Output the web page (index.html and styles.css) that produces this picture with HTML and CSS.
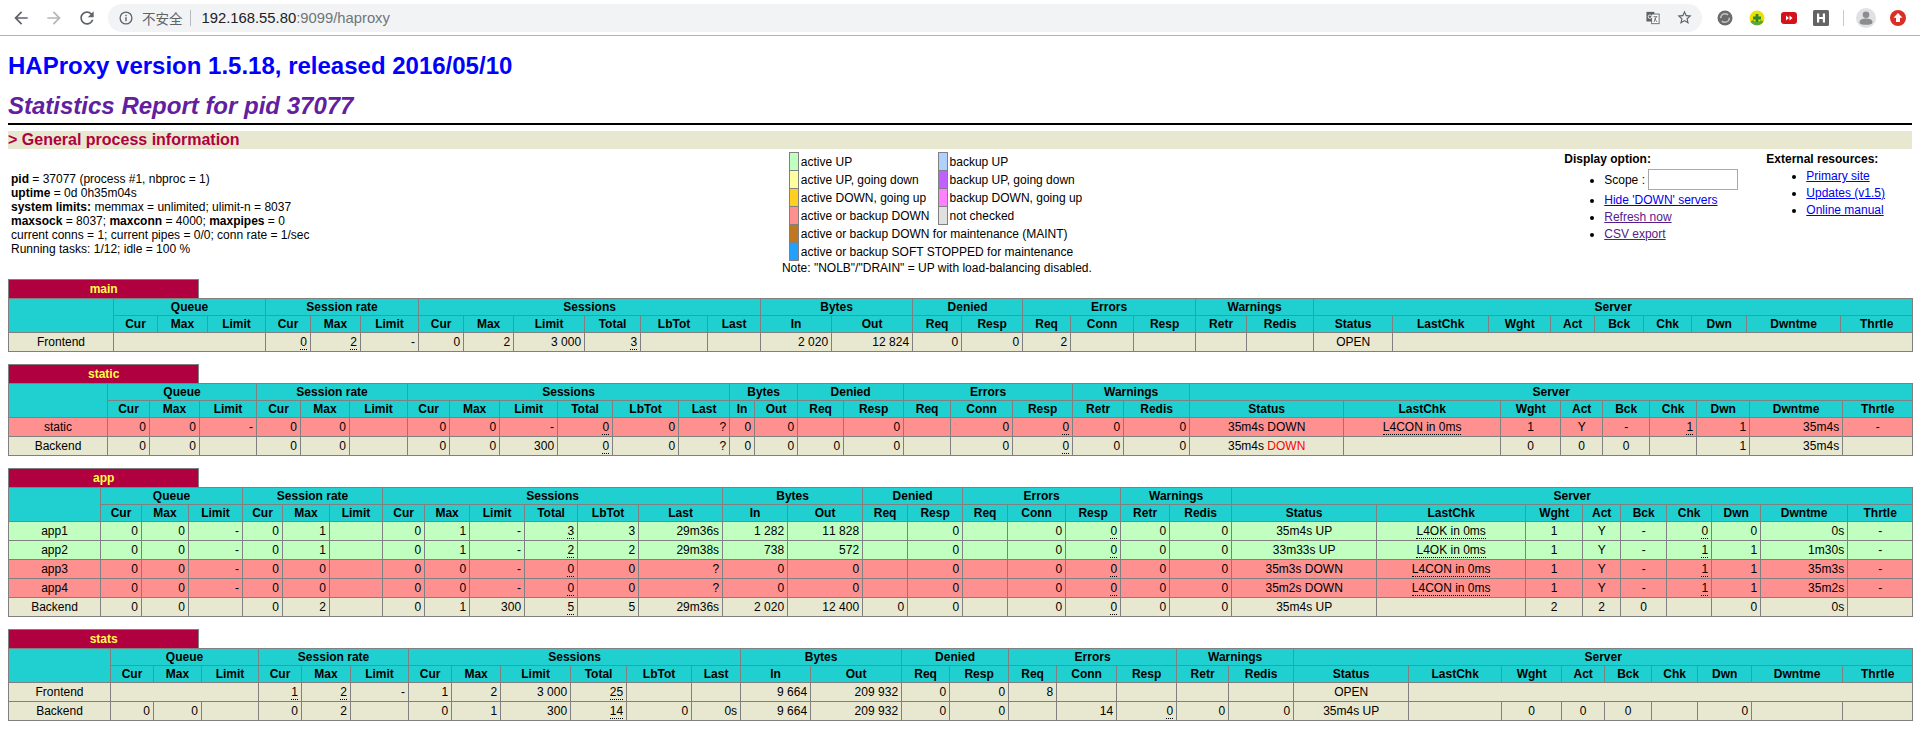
FILE: index.html
```html
<!DOCTYPE html>
<html lang="en">
<head>
<meta charset="utf-8">
<title>Statistics Report for HAProxy</title>
<link rel="stylesheet" href="styles.css">
</head>
<body>
<header class="toolbar">
  <svg class="nav nav-first" viewBox="0 0 24 24"><path fill="#5f6368" d="M20 11H7.83l5.59-5.59L12 4l-8 8 8 8 1.41-1.41L7.83 13H20v-2z"/></svg>
  <svg class="nav" viewBox="0 0 24 24"><path fill="#b4b6b9" d="M12 4l-1.41 1.41L16.17 11H4v2h12.17l-5.58 5.59L12 20l8-8z"/></svg>
  <svg class="nav" viewBox="0 0 24 24"><path fill="#5f6368" d="M17.65 6.35C16.2 4.9 14.21 4 12 4c-4.42 0-7.99 3.58-7.99 8s3.57 8 7.99 8c3.73 0 6.84-2.55 7.73-6h-2.08c-.82 2.33-3.04 4-5.65 4-3.31 0-6-2.69-6-6s2.69-6 6-6c1.66 0 3.14.69 4.22 1.78L13 11h7V4l-2.35 2.35z"/></svg>
  <div class="omnibox">
    <svg class="info" viewBox="0 0 14 14"><circle cx="7" cy="7" r="5.9" fill="none" stroke="#5f6368" stroke-width="1.3"/><rect x="6.3" y="6.2" width="1.4" height="4" fill="#5f6368"/><rect x="6.3" y="3.8" width="1.4" height="1.4" fill="#5f6368"/></svg>
    <span class="insecure">不安全</span>
    <span class="sep"></span>
    <span class="url"><span class="host">192.168.55.80</span>:9099/haproxy</span>
    <svg class="translate" viewBox="0 0 16 16"><rect x="0.5" y="1" width="9" height="11" fill="#5f6368"/><rect x="6.5" y="3.5" width="8.5" height="11" fill="#fff" stroke="#5f6368"/><path d="M8.5 6.5h4.5M11.8 6.5l-2.6 6M9.6 8.5l3 4" fill="none" stroke="#5f6368"/><circle cx="4.5" cy="6.5" r="2" fill="none" stroke="#fff"/></svg>
    <svg class="star" viewBox="0 0 24 24"><path fill="#5f6368" d="M22 9.24l-7.19-.62L12 2 9.19 8.63 2 9.24l5.46 4.73L5.82 21 12 17.27 18.18 21l-1.63-7.03L22 9.24zM12 15.4l-3.76 2.27 1-4.28-3.32-2.88 4.38-.38L12 6.1l1.71 4.04 4.38.38-3.32 2.88 1 4.28L12 15.4z"/></svg>
  </div>
  <svg class="ext ext-first" viewBox="0 0 16 16"><circle cx="8" cy="8" r="7.5" fill="#6b6b6b"/><circle cx="8" cy="8" r="4.3" fill="none" stroke="#c4c4c4" stroke-width="1.6" stroke-dasharray="10 3"/></svg>
  <svg class="ext" viewBox="0 0 16 16"><circle cx="8" cy="8" r="7.5" fill="#f0e000"/><path d="M1.5 11.5A7.5 7.5 0 0 0 14.5 11.5L12 10A5 5 0 0 1 4 10z" fill="#58a83c"/><path d="M6.6 4h2.8v2.6H12v2.8H9.400v2.600H6.600V9.400H4V6.600h2.600z" fill="#2c8a2c"/></svg>
  <svg class="ext" viewBox="0 0 16 16"><rect y="2" width="16" height="12" rx="3" fill="#d3121b"/><path d="M5 5.500l3 2.500-3 2.500zM8.500 5.500l3 2.500-3 2.500z" fill="#fff"/></svg>
  <svg class="ext" viewBox="0 0 16 16"><rect width="16" height="16" rx="1.500" fill="#646464"/><path d="M4 3.500h2.200v3.400h3.600V3.500H12v9H9.800V8.900H6.200v3.600H4z" fill="#fff"/></svg>
  <span class="tool-sep"></span>
  <svg class="avatar" viewBox="0 0 20 20"><circle cx="10" cy="10" r="10" fill="#dfe1e4"/><circle cx="10" cy="6.800" r="3.300" fill="#8d8d8d"/><path d="M3.500 14c0-2.500 3.500-3.600 6.500-3.600s6.500 1.100 6.500 3.600-3 2.800-6.500 2.800-6.500-.3-6.500-2.800z" fill="#8d8d8d"/></svg>
  <svg class="update" viewBox="0 0 16 16"><circle cx="8" cy="8" r="8" fill="#d93025"/><path d="M8 3l4.500 4.800H10V12H6V7.800H3.500z" fill="#fff"/></svg>
</header>

<main class="page">
<h1><a class="home" href="#">HAProxy version 1.5.18, released 2016/05/10</a></h1>
<h2>Statistics Report for pid 37077</h2>
<hr class="rule">
<h3>&gt; General process information</h3>

<table class="overview">
<tr>
<td class="ov-proc">
<p class="proc"><b>pid</b> = 37077 (process #1, nbproc = 1)<br>
<b>uptime</b> = 0d 0h35m04s<br>
<b>system limits:</b> memmax = unlimited; ulimit-n = 8037<br>
<b>maxsock</b> = 8037; <b>maxconn</b> = 4000; <b>maxpipes</b> = 0<br>
current conns = 1; current pipes = 0/0; conn rate = 1/sec<br>
Running tasks: 1/12; idle = 100 %</p>
</td>
<td class="ov-legend">
<table class="lgd">
<tr><td class="c-up">&nbsp;</td><td class="noborder">active UP </td><td class="c-bup">&nbsp;</td><td class="noborder">backup UP </td></tr>
<tr><td class="c-nolb">&nbsp;</td><td class="noborder">active UP, going down </td><td class="c-bnolb">&nbsp;</td><td class="noborder">backup UP, going down </td></tr>
<tr><td class="c-goup">&nbsp;</td><td class="noborder">active DOWN, going up </td><td class="c-bgoup">&nbsp;</td><td class="noborder">backup DOWN, going up </td></tr>
<tr><td class="c-down">&nbsp;</td><td class="noborder">active or backup DOWN &nbsp;</td><td class="c-nochk">&nbsp;</td><td class="noborder">not checked </td></tr>
<tr><td class="c-maint">&nbsp;</td><td class="noborder" colspan="3">active or backup DOWN for maintenance (MAINT) &nbsp;</td></tr>
<tr><td class="c-soft">&nbsp;</td><td class="noborder" colspan="3">active or backup SOFT STOPPED for maintenance &nbsp;</td></tr>
</table>
Note: "NOLB"/"DRAIN" = UP with load-balancing disabled.
</td>
<td class="ov-side">
<b>Display option:</b>
<ul class="opts">
<li><form class="scope">Scope : <input class="scope-input" name="scope"></form></li>
<li><a href="#hide">Hide 'DOWN' servers</a></li>
<li><a class="seen" href="#refresh">Refresh now</a></li>
<li><a class="seen" href="#csv">CSV export</a></li>
</ul>
</td>
<td class="ov-side">
<b>External resources:</b>
<ul class="opts">
<li><a href="#site">Primary site</a></li>
<li><a href="#updates">Updates (v1.5)</a></li>
<li><a href="#manual">Online manual</a></li>
</ul>
</td>
</tr>
</table>

<table class="tbl name"><tr><th class="pxname">main</th><th class="empty"></th></tr></table>
<table class="tbl stats t-main">
<colgroup><col><col><col><col><col><col><col><col><col><col><col><col><col><col><col><col><col><col><col><col><col><col><col><col><col><col><col><col><col><col><col></colgroup>
<tr class="titre"><th rowspan="2"></th><th colspan="3">Queue</th><th colspan="3">Session rate</th><th colspan="6">Sessions</th><th colspan="2">Bytes</th><th colspan="2">Denied</th><th colspan="3">Errors</th><th colspan="2">Warnings</th><th colspan="9">Server</th></tr>
<tr class="titre"><th>Cur</th><th>Max</th><th>Limit</th><th>Cur</th><th>Max</th><th>Limit</th><th>Cur</th><th>Max</th><th>Limit</th><th>Total</th><th>LbTot</th><th>Last</th><th>In</th><th>Out</th><th>Req</th><th>Resp</th><th>Req</th><th>Conn</th><th>Resp</th><th>Retr</th><th>Redis</th><th>Status</th><th>LastChk</th><th>Wght</th><th>Act</th><th>Bck</th><th>Chk</th><th>Dwn</th><th>Dwntme</th><th>Thrtle</th></tr>
<tr class="r-px"><td class="ac">Frontend</td><td colspan="3"></td><td><u>0</u></td><td><u>2</u></td><td>-</td><td>0</td><td>2</td><td><span class="rls">3</span>000</td><td><u>3</u></td><td></td><td></td><td><span class="rls">2</span>020</td><td>1<span class="rls">2</span>824</td><td>0</td><td>0</td><td>2</td><td></td><td></td><td></td><td></td><td class="ac">OPEN</td><td colspan="8"></td></tr>
</table>
<p class="gap"></p>

<table class="tbl name"><tr><th class="pxname">static</th><th class="empty"></th></tr></table>
<table class="tbl stats t-static">
<colgroup><col><col><col><col><col><col><col><col><col><col><col><col><col><col><col><col><col><col><col><col><col><col><col><col><col><col><col><col><col><col><col></colgroup>
<tr class="titre"><th rowspan="2"></th><th colspan="3">Queue</th><th colspan="3">Session rate</th><th colspan="6">Sessions</th><th colspan="2">Bytes</th><th colspan="2">Denied</th><th colspan="3">Errors</th><th colspan="2">Warnings</th><th colspan="9">Server</th></tr>
<tr class="titre"><th>Cur</th><th>Max</th><th>Limit</th><th>Cur</th><th>Max</th><th>Limit</th><th>Cur</th><th>Max</th><th>Limit</th><th>Total</th><th>LbTot</th><th>Last</th><th>In</th><th>Out</th><th>Req</th><th>Resp</th><th>Req</th><th>Conn</th><th>Resp</th><th>Retr</th><th>Redis</th><th>Status</th><th>LastChk</th><th>Wght</th><th>Act</th><th>Bck</th><th>Chk</th><th>Dwn</th><th>Dwntme</th><th>Thrtle</th></tr>
<tr class="r-down"><td class="ac">static</td><td>0</td><td>0</td><td>-</td><td>0</td><td>0</td><td></td><td>0</td><td>0</td><td>-</td><td><u>0</u></td><td>0</td><td>?</td><td>0</td><td>0</td><td></td><td>0</td><td></td><td>0</td><td><u>0</u></td><td>0</td><td>0</td><td class="ac">35m4s DOWN</td><td class="ac"><u>L4CON in 0ms</u></td><td class="ac">1</td><td class="ac">Y</td><td class="ac">-</td><td><u>1</u></td><td>1</td><td>35m4s</td><td class="ac">-</td></tr>
<tr class="r-px"><td class="ac">Backend</td><td>0</td><td>0</td><td></td><td>0</td><td>0</td><td></td><td>0</td><td>0</td><td>300</td><td><u>0</u></td><td>0</td><td>?</td><td>0</td><td>0</td><td>0</td><td>0</td><td></td><td>0</td><td><u>0</u></td><td>0</td><td>0</td><td class="ac">35m4s <span class="red">DOWN</span></td><td></td><td class="ac">0</td><td class="ac">0</td><td class="ac">0</td><td></td><td>1</td><td>35m4s</td><td></td></tr>
</table>
<p class="gap"></p>

<table class="tbl name"><tr><th class="pxname">app</th><th class="empty"></th></tr></table>
<table class="tbl stats t-app">
<colgroup><col><col><col><col><col><col><col><col><col><col><col><col><col><col><col><col><col><col><col><col><col><col><col><col><col><col><col><col><col><col><col></colgroup>
<tr class="titre"><th rowspan="2"></th><th colspan="3">Queue</th><th colspan="3">Session rate</th><th colspan="6">Sessions</th><th colspan="2">Bytes</th><th colspan="2">Denied</th><th colspan="3">Errors</th><th colspan="2">Warnings</th><th colspan="9">Server</th></tr>
<tr class="titre"><th>Cur</th><th>Max</th><th>Limit</th><th>Cur</th><th>Max</th><th>Limit</th><th>Cur</th><th>Max</th><th>Limit</th><th>Total</th><th>LbTot</th><th>Last</th><th>In</th><th>Out</th><th>Req</th><th>Resp</th><th>Req</th><th>Conn</th><th>Resp</th><th>Retr</th><th>Redis</th><th>Status</th><th>LastChk</th><th>Wght</th><th>Act</th><th>Bck</th><th>Chk</th><th>Dwn</th><th>Dwntme</th><th>Thrtle</th></tr>
<tr class="r-up"><td class="ac">app1</td><td>0</td><td>0</td><td>-</td><td>0</td><td>1</td><td></td><td>0</td><td>1</td><td>-</td><td><u>3</u></td><td>3</td><td>29m36s</td><td><span class="rls">1</span>282</td><td>1<span class="rls">1</span>828</td><td></td><td>0</td><td></td><td>0</td><td><u>0</u></td><td>0</td><td>0</td><td class="ac">35m4s UP</td><td class="ac"><u>L4OK in 0ms</u></td><td class="ac">1</td><td class="ac">Y</td><td class="ac">-</td><td><u>0</u></td><td>0</td><td>0s</td><td class="ac">-</td></tr>
<tr class="r-up"><td class="ac">app2</td><td>0</td><td>0</td><td>-</td><td>0</td><td>1</td><td></td><td>0</td><td>1</td><td>-</td><td><u>2</u></td><td>2</td><td>29m38s</td><td>738</td><td>572</td><td></td><td>0</td><td></td><td>0</td><td><u>0</u></td><td>0</td><td>0</td><td class="ac">33m33s UP</td><td class="ac"><u>L4OK in 0ms</u></td><td class="ac">1</td><td class="ac">Y</td><td class="ac">-</td><td><u>1</u></td><td>1</td><td>1m30s</td><td class="ac">-</td></tr>
<tr class="r-down"><td class="ac">app3</td><td>0</td><td>0</td><td>-</td><td>0</td><td>0</td><td></td><td>0</td><td>0</td><td>-</td><td><u>0</u></td><td>0</td><td>?</td><td>0</td><td>0</td><td></td><td>0</td><td></td><td>0</td><td><u>0</u></td><td>0</td><td>0</td><td class="ac">35m3s DOWN</td><td class="ac"><u>L4CON in 0ms</u></td><td class="ac">1</td><td class="ac">Y</td><td class="ac">-</td><td><u>1</u></td><td>1</td><td>35m3s</td><td class="ac">-</td></tr>
<tr class="r-down"><td class="ac">app4</td><td>0</td><td>0</td><td>-</td><td>0</td><td>0</td><td></td><td>0</td><td>0</td><td>-</td><td><u>0</u></td><td>0</td><td>?</td><td>0</td><td>0</td><td></td><td>0</td><td></td><td>0</td><td><u>0</u></td><td>0</td><td>0</td><td class="ac">35m2s DOWN</td><td class="ac"><u>L4CON in 0ms</u></td><td class="ac">1</td><td class="ac">Y</td><td class="ac">-</td><td><u>1</u></td><td>1</td><td>35m2s</td><td class="ac">-</td></tr>
<tr class="r-px"><td class="ac">Backend</td><td>0</td><td>0</td><td></td><td>0</td><td>2</td><td></td><td>0</td><td>1</td><td>300</td><td><u>5</u></td><td>5</td><td>29m36s</td><td><span class="rls">2</span>020</td><td>1<span class="rls">2</span>400</td><td>0</td><td>0</td><td></td><td>0</td><td><u>0</u></td><td>0</td><td>0</td><td class="ac">35m4s UP</td><td></td><td class="ac">2</td><td class="ac">2</td><td class="ac">0</td><td></td><td>0</td><td>0s</td><td></td></tr>
</table>
<p class="gap"></p>

<table class="tbl name"><tr><th class="pxname">stats</th><th class="empty"></th></tr></table>
<table class="tbl stats t-stats">
<colgroup><col><col><col><col><col><col><col><col><col><col><col><col><col><col><col><col><col><col><col><col><col><col><col><col><col><col><col><col><col><col><col></colgroup>
<tr class="titre"><th rowspan="2"></th><th colspan="3">Queue</th><th colspan="3">Session rate</th><th colspan="6">Sessions</th><th colspan="2">Bytes</th><th colspan="2">Denied</th><th colspan="3">Errors</th><th colspan="2">Warnings</th><th colspan="9">Server</th></tr>
<tr class="titre"><th>Cur</th><th>Max</th><th>Limit</th><th>Cur</th><th>Max</th><th>Limit</th><th>Cur</th><th>Max</th><th>Limit</th><th>Total</th><th>LbTot</th><th>Last</th><th>In</th><th>Out</th><th>Req</th><th>Resp</th><th>Req</th><th>Conn</th><th>Resp</th><th>Retr</th><th>Redis</th><th>Status</th><th>LastChk</th><th>Wght</th><th>Act</th><th>Bck</th><th>Chk</th><th>Dwn</th><th>Dwntme</th><th>Thrtle</th></tr>
<tr class="r-px"><td class="ac">Frontend</td><td colspan="3"></td><td><u>1</u></td><td><u>2</u></td><td>-</td><td>1</td><td>2</td><td><span class="rls">3</span>000</td><td><u>25</u></td><td></td><td></td><td><span class="rls">9</span>664</td><td>20<span class="rls">9</span>932</td><td>0</td><td>0</td><td>8</td><td></td><td></td><td></td><td></td><td class="ac">OPEN</td><td colspan="8"></td></tr>
<tr class="r-px"><td class="ac">Backend</td><td>0</td><td>0</td><td></td><td>0</td><td>2</td><td></td><td>0</td><td>1</td><td>300</td><td><u>14</u></td><td>0</td><td>0s</td><td><span class="rls">9</span>664</td><td>20<span class="rls">9</span>932</td><td>0</td><td>0</td><td></td><td>14</td><td><u>0</u></td><td>0</td><td>0</td><td class="ac">35m4s UP</td><td></td><td class="ac">0</td><td class="ac">0</td><td class="ac">0</td><td></td><td>0</td><td></td><td></td></tr>
</table>
</main>
</body>
</html>
```
FILE: styles.css
```css
html, body { margin: 0; padding: 0; }
body {
  font-family: "Liberation Sans", Arial, sans-serif;
  font-size: 12px;
  color: #000;
  background: #fff;
  overflow: hidden;
}
/* browser toolbar */
.toolbar {
  display: flex;
  align-items: center;
  height: 35px;
  border-bottom: 1px solid #b4b4b4;
  background: #fff;
}
.nav { width: 20px; height: 20px; margin-right: 13px; flex: none; }
.nav-first { margin-left: 11px; }
.omnibox {
  display: flex;
  align-items: center;
  width: 1594px;
  height: 28px;
  margin-left: -2px;
  border-radius: 14px;
  background: #f1f3f4;
  flex: none;
}
.info { width: 14px; height: 14px; margin-left: 11px; flex: none; }
.insecure { margin-left: 9px; font: 13.500px "Noto Sans CJK SC", sans-serif; color: #5f6368; }
.sep { width: 1px; height: 16px; margin: 0 11px 0 7px; background: #b8babd; }
.url { font: 14.800px "Liberation Sans", Arial, sans-serif; color: #70757a; }
.host { color: #202124; }
.translate { width: 14px; height: 14px; margin-left: auto; flex: none; }
.star { width: 17px; height: 17px; margin: 0 9px 0 16px; flex: none; }
.ext { width: 16px; height: 16px; margin-right: 16px; flex: none; }
.ext-first { margin-left: 15px; }
.tool-sep { width: 1px; height: 16px; margin: 0 12px 0 -2px; background: #c8c8c8; }
.avatar { width: 20px; height: 20px; margin-right: 14px; flex: none; }
.update { width: 16px; height: 16px; flex: none; }

/* page */
.page { padding: 0 8px; }
h1 { font-size: 24px; margin: 16px 0 12px; }
.home { color: #0000ff; text-decoration: none; }
h2 {
  font-size: 24px;
  font-weight: bold;
  font-style: italic;
  color: #6020a0;
  margin: 0;
}
.rule {
  margin: 3px 0 6px;
  border: 0;
  background: #000;
  height: 2px;
}
h3 {
  font-size: 16px;
  font-weight: bold;
  color: #b00040;
  background: #e8e8d0;
  margin: 0;
}
.overview { width: 100%; border-spacing: 2px; border: 0; }
.overview > tbody > tr > td { padding: 1px 1px 2px; font-size: 12px; white-space: nowrap; }
.ov-proc { width: 1%; text-align: left; }
.ov-legend { text-align: center; }
.ov-side { width: 1%; text-align: left; vertical-align: top; }
.proc { margin: 12px 0; }
.opts { margin: 3px 0 12px; padding-left: 40px; }
li { margin-top: 3px; margin-right: 24px; }
.scope { margin: 0; }
.scope-input {
  box-sizing: border-box;
  width: 90px;
  height: 21px;
  padding: 1px 2px;
  border: 1px solid #a9a9a9;
  background: #fff;
  vertical-align: baseline;
}
a { color: #0000ee; }
a.seen { color: #551a8b; }

/* legend */
.lgd { border-collapse: collapse; border: 0; margin: 0 auto; font-size: 12px; }
.lgd td { border: 1px solid #808080; padding: 2px 2px 1px; text-align: left; }
.lgd td.noborder { border: 0; white-space: nowrap; }
.c-up { background: #c0ffc0; }
.c-nolb { background: #ffffa0; }
.c-goup { background: #ffd020; }
.c-down { background: #ff9090; }
.c-maint { background: #c07820; }
.c-soft { background: #20a0ff; }
.c-bup { background: #b0d0ff; }
.c-bnolb { background: #c060ff; }
.c-bgoup { background: #ff80ff; }
.c-nochk { background: #e0e0e0; }

/* stats tables */
.tbl { border-collapse: collapse; border: 0; width: 100%; font-size: 12px; }
.stats { table-layout: fixed; }
.tbl td {
  text-align: right;
  border: 1px solid #808080;
  padding: 2px 3px;
  white-space: nowrap;
  font-size: 12px;
}
.tbl td.ac { text-align: center; }
.tbl th { border: 1px solid #808080; font-size: 12px; padding: 1px; }
.tbl th.pxname {
  width: 10%;
  background: #b00040;
  color: #ffff40;
  font-weight: bold;
  border-style: solid solid none solid;
  padding: 2px 3px;
  white-space: nowrap;
}
.tbl th.empty { width: 90%; border-style: none; background: #fff; }
.titre { background: #20d0d0; color: #000; font-weight: bold; text-align: center; }
.r-px { background: #e8e8d0; }
.r-up { background: #c0ffc0; }
.r-down { background: #ff9090; }
.red { color: #ff0000; }
u { text-decoration: none; border-bottom: 1px dotted #000; }
.rls { letter-spacing: 0.2em; margin-right: 1px; }
.gap { margin: 12px 0; }

/* column widths, per table */
.t-main col:nth-child(1) { width: 105px; } .t-main col:nth-child(2) { width: 44px; } .t-main col:nth-child(3) { width: 50px; } .t-main col:nth-child(4) { width: 58px; }
.t-main col:nth-child(5) { width: 45px; } .t-main col:nth-child(6) { width: 50px; } .t-main col:nth-child(7) { width: 58px; } .t-main col:nth-child(8) { width: 45px; }
.t-main col:nth-child(9) { width: 50px; } .t-main col:nth-child(10) { width: 71px; } .t-main col:nth-child(11) { width: 56px; } .t-main col:nth-child(12) { width: 67px; }
.t-main col:nth-child(13) { width: 53px; } .t-main col:nth-child(14) { width: 71px; } .t-main col:nth-child(15) { width: 81px; } .t-main col:nth-child(16) { width: 49px; }
.t-main col:nth-child(17) { width: 61px; } .t-main col:nth-child(18) { width: 48px; } .t-main col:nth-child(19) { width: 63px; } .t-main col:nth-child(20) { width: 62px; }
.t-main col:nth-child(21) { width: 51px; } .t-main col:nth-child(22) { width: 67px; } .t-main col:nth-child(23) { width: 79px; } .t-main col:nth-child(24) { width: 96px; }
.t-main col:nth-child(25) { width: 62px; } .t-main col:nth-child(26) { width: 44px; } .t-main col:nth-child(27) { width: 49px; } .t-main col:nth-child(28) { width: 48px; }
.t-main col:nth-child(29) { width: 55px; } .t-main col:nth-child(30) { width: 94px; } .t-main col:nth-child(31) { width: 72px; }

.t-static col:nth-child(1) { width: 99px; } .t-static col:nth-child(2) { width: 42px; } .t-static col:nth-child(3) { width: 50px; } .t-static col:nth-child(4) { width: 57px; }
.t-static col:nth-child(5) { width: 44px; } .t-static col:nth-child(6) { width: 49px; } .t-static col:nth-child(7) { width: 58px; } .t-static col:nth-child(8) { width: 42px; }
.t-static col:nth-child(9) { width: 50px; } .t-static col:nth-child(10) { width: 58px; } .t-static col:nth-child(11) { width: 55px; } .t-static col:nth-child(12) { width: 66px; }
.t-static col:nth-child(13) { width: 51px; } .t-static col:nth-child(14) { width: 25px; } .t-static col:nth-child(15) { width: 43px; } .t-static col:nth-child(16) { width: 46px; }
.t-static col:nth-child(17) { width: 60px; } .t-static col:nth-child(18) { width: 47px; } .t-static col:nth-child(19) { width: 62px; } .t-static col:nth-child(20) { width: 60px; }
.t-static col:nth-child(21) { width: 51px; } .t-static col:nth-child(22) { width: 66px; } .t-static col:nth-child(23) { width: 154px; } .t-static col:nth-child(24) { width: 157px; }
.t-static col:nth-child(25) { width: 60px; } .t-static col:nth-child(26) { width: 42px; } .t-static col:nth-child(27) { width: 47px; } .t-static col:nth-child(28) { width: 47px; }
.t-static col:nth-child(29) { width: 53px; } .t-static col:nth-child(30) { width: 93px; } .t-static col:nth-child(31) { width: 70px; }

.t-app col:nth-child(1) { width: 92px; } .t-app col:nth-child(2) { width: 41px; } .t-app col:nth-child(3) { width: 47px; } .t-app col:nth-child(4) { width: 54px; }
.t-app col:nth-child(5) { width: 40px; } .t-app col:nth-child(6) { width: 47px; } .t-app col:nth-child(7) { width: 53px; } .t-app col:nth-child(8) { width: 42px; }
.t-app col:nth-child(9) { width: 45px; } .t-app col:nth-child(10) { width: 55px; } .t-app col:nth-child(11) { width: 53px; } .t-app col:nth-child(12) { width: 61px; }
.t-app col:nth-child(13) { width: 84px; } .t-app col:nth-child(14) { width: 65px; } .t-app col:nth-child(15) { width: 75px; } .t-app col:nth-child(16) { width: 45px; }
.t-app col:nth-child(17) { width: 55px; } .t-app col:nth-child(18) { width: 45px; } .t-app col:nth-child(19) { width: 58px; } .t-app col:nth-child(20) { width: 55px; }
.t-app col:nth-child(21) { width: 49px; } .t-app col:nth-child(22) { width: 62px; } .t-app col:nth-child(23) { width: 145px; } .t-app col:nth-child(24) { width: 149px; }
.t-app col:nth-child(25) { width: 57px; } .t-app col:nth-child(26) { width: 38px; } .t-app col:nth-child(27) { width: 46px; } .t-app col:nth-child(28) { width: 45px; }
.t-app col:nth-child(29) { width: 49px; } .t-app col:nth-child(30) { width: 87px; } .t-app col:nth-child(31) { width: 65px; }

.t-stats col:nth-child(1) { width: 102px; } .t-stats col:nth-child(2) { width: 43px; } .t-stats col:nth-child(3) { width: 48px; } .t-stats col:nth-child(4) { width: 57px; }
.t-stats col:nth-child(5) { width: 43px; } .t-stats col:nth-child(6) { width: 49px; } .t-stats col:nth-child(7) { width: 58px; } .t-stats col:nth-child(8) { width: 43px; }
.t-stats col:nth-child(9) { width: 49px; } .t-stats col:nth-child(10) { width: 70px; } .t-stats col:nth-child(11) { width: 56px; } .t-stats col:nth-child(12) { width: 65px; }
.t-stats col:nth-child(13) { width: 49px; } .t-stats col:nth-child(14) { width: 70px; } .t-stats col:nth-child(15) { width: 91px; } .t-stats col:nth-child(16) { width: 48px; }
.t-stats col:nth-child(17) { width: 59px; } .t-stats col:nth-child(18) { width: 48px; } .t-stats col:nth-child(19) { width: 60px; } .t-stats col:nth-child(20) { width: 60px; }
.t-stats col:nth-child(21) { width: 52px; } .t-stats col:nth-child(22) { width: 65px; } .t-stats col:nth-child(23) { width: 115px; } .t-stats col:nth-child(24) { width: 93px; }
.t-stats col:nth-child(25) { width: 60px; } .t-stats col:nth-child(26) { width: 43px; } .t-stats col:nth-child(27) { width: 47px; } .t-stats col:nth-child(28) { width: 46px; }
.t-stats col:nth-child(29) { width: 54px; } .t-stats col:nth-child(30) { width: 91px; } .t-stats col:nth-child(31) { width: 70px; }
```
